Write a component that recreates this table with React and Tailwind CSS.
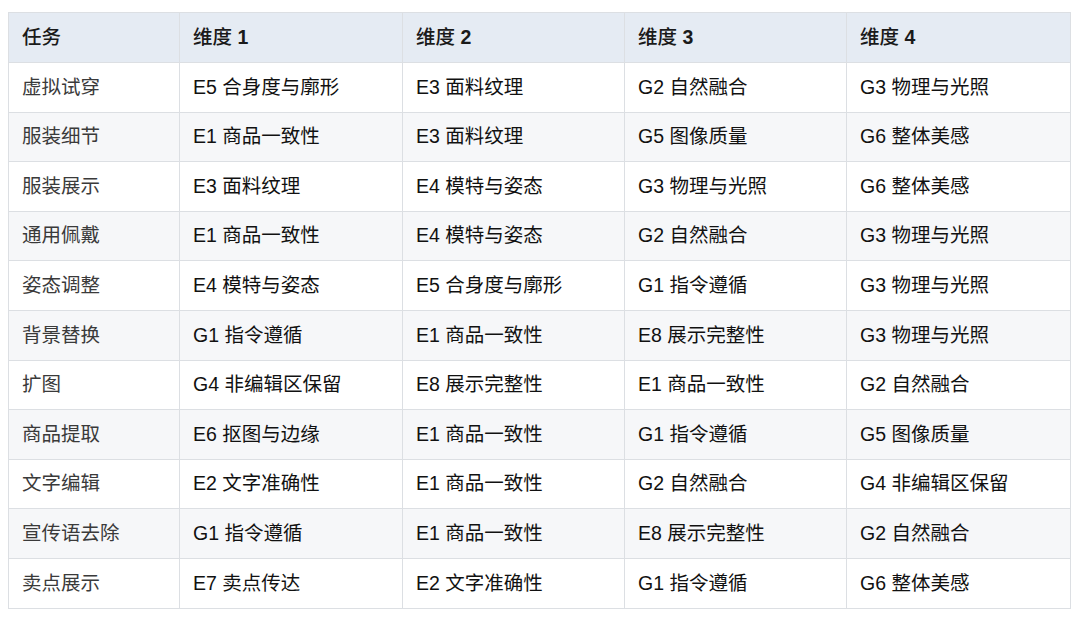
import React from "react";

const rows = [
  ["虚拟试穿", "E5 合身度与廓形", "E3 面料纹理", "G2 自然融合", "G3 物理与光照"],
  ["服装细节", "E1 商品一致性", "E3 面料纹理", "G5 图像质量", "G6 整体美感"],
  ["服装展示", "E3 面料纹理", "E4 模特与姿态", "G3 物理与光照", "G6 整体美感"],
  ["通用佩戴", "E1 商品一致性", "E4 模特与姿态", "G2 自然融合", "G3 物理与光照"],
  ["姿态调整", "E4 模特与姿态", "E5 合身度与廓形", "G1 指令遵循", "G3 物理与光照"],
  ["背景替换", "G1 指令遵循", "E1 商品一致性", "E8 展示完整性", "G3 物理与光照"],
  ["扩图", "G4 非编辑区保留", "E8 展示完整性", "E1 商品一致性", "G2 自然融合"],
  ["商品提取", "E6 抠图与边缘", "E1 商品一致性", "G1 指令遵循", "G5 图像质量"],
  ["文字编辑", "E2 文字准确性", "E1 商品一致性", "G2 自然融合", "G4 非编辑区保留"],
  ["宣传语去除", "G1 指令遵循", "E1 商品一致性", "E8 展示完整性", "G2 自然融合"],
  ["卖点展示", "E7 卖点传达", "E2 文字准确性", "G1 指令遵循", "G6 整体美感"],
];

// header: CJK part renders medium, the number is bold
const headers = [["任务", ""], ["维度", "1"], ["维度", "2"], ["维度", "3"], ["维度", "4"]];

export default function App() {
  return (
    <div
      className="w-[1080px] h-[618px] bg-white pt-[12px] pl-[8px]"
      style={{ fontFamily: '"Liberation Sans", "Noto Sans CJK SC", sans-serif' }}
    >
      <table className="border-collapse table-fixed w-[1062px] text-[19.5px]">
        <colgroup>
          <col className="w-[171px]" />
          <col className="w-[223px]" />
          <col className="w-[222px]" />
          <col className="w-[222px]" />
          <col className="w-[224px]" />
        </colgroup>
        <thead>
          <tr className="bg-[#e5ebf3] h-[50px]">
            {headers.map(([cn, num], i) => (
              <th
                key={i}
                className="border border-[#dcdfe3] text-left font-medium px-[13px] text-[#1a1a1a]"
              >
                {cn}
                {num && <span className="font-bold"> {num}</span>}
              </th>
            ))}
          </tr>
        </thead>
        <tbody>
          {rows.map((r, i) => (
            <tr key={i} className={`h-[49.6px] ${i % 2 === 1 ? "bg-[#f6f7f9]" : "bg-white"}`}>
              {r.map((c, j) => (
                <td
                  key={j}
                  className={`border border-[#dcdfe3] px-[13px] ${j === 0 ? "text-[#3a3a3a]" : "text-[#111111]"}`}
                >
                  {c}
                </td>
              ))}
            </tr>
          ))}
        </tbody>
      </table>
    </div>
  );
}
